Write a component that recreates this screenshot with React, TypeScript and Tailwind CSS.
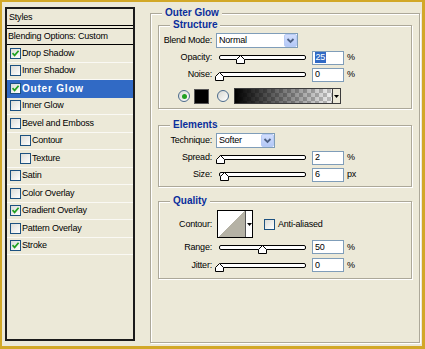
import React from "react";

type Row = { label: string; checked: boolean; indent?: boolean; selected?: boolean };

const rows: Row[] = [
  { label: "Drop Shadow", checked: true },
  { label: "Inner Shadow", checked: false },
  { label: "Outer Glow", checked: true, selected: true },
  { label: "Inner Glow", checked: false },
  { label: "Bevel and Emboss", checked: false },
  { label: "Contour", checked: false, indent: true },
  { label: "Texture", checked: false, indent: true },
  { label: "Satin", checked: false },
  { label: "Color Overlay", checked: false },
  { label: "Gradient Overlay", checked: true },
  { label: "Pattern Overlay", checked: false },
  { label: "Stroke", checked: true },
];

function Checkbox({ checked }: { checked: boolean }) {
  return (
    <span className="flex items-center justify-center w-[11px] h-[11px] shrink-0 border border-[#1c5180] bg-gradient-to-br from-[#dcdcd7] to-white">
      {checked && (
        <svg width="9" height="9" viewBox="0 0 9 9">
          <path d="M1.5 4.2 L3.6 6.4 L7.6 1.8" fill="none" stroke="#21a121" strokeWidth="1.7" />
        </svg>
      )}
    </span>
  );
}

function Radio({ on }: { on: boolean }) {
  return (
    <span className="flex items-center justify-center w-[12px] h-[12px] shrink-0 rounded-full border border-[#4a6a8c] bg-gradient-to-br from-[#d8d8d2] to-white">
      {on && <span className="w-[5px] h-[5px] rounded-full bg-[#21a121]" />}
    </span>
  );
}

function LeftPanel() {
  return (
    <div className="w-[130px] h-[334px] shrink-0 border-2 border-[#1b1b1b] flex flex-col">
      <div className="h-[17px] border-b border-black flex items-center pl-[2px]">Styles</div>
      <div className="h-[2px]" />
      <div className="h-[17px] border-y border-black flex items-center pl-[1px]">Blending Options: Custom</div>
      {rows.map((r) => (
        <div
          key={r.label}
          className={
            r.selected
              ? "h-[17.5px] flex items-center bg-[#316ac5] text-white font-bold text-[10px] tracking-[0.8px] pl-[3px]"
              : r.indent
              ? "h-[17.5px] flex items-center border-b border-[#faf9f4] pl-[13px]"
              : "h-[17.5px] flex items-center border-b border-[#faf9f4] pl-[3px]"
          }
        >
          <Checkbox checked={r.checked} />
          <span className="ml-[1px]">{r.label}</span>
        </div>
      ))}
    </div>
  );
}

function Group({ title, className, children }: { title: string; className: string; children?: React.ReactNode }) {
  return (
    <div className={"relative border border-[#aca899] shadow-[1px_1px_0_#fff,inset_1px_1px_0_#fff] " + className}>
      <span className="absolute left-[11px] top-[-7px] px-[3px] bg-[#ece9d8] text-[10px] leading-[12px] font-bold tracking-normal text-[#0a2e9c]">
        {title}
      </span>
      {children}
    </div>
  );
}

function Label({ children }: { children: React.ReactNode }) {
  return <span className="w-[53px] shrink-0 text-right">{children}</span>;
}

function Chevron() {
  return (
    <span className="w-[13px] h-[13px] shrink-0 rounded-[2px] border border-[#b8cbf5] bg-gradient-to-b from-[#d2defd] to-[#b3c8f6] flex items-center justify-center">
      <svg width="9" height="9" viewBox="0 0 9 9">
        <path d="M1.5 3 L4.5 6 L7.5 3" fill="none" stroke="#4d6185" strokeWidth="1.8" />
      </svg>
    </span>
  );
}

function Select({ value, className }: { value: string; className: string }) {
  return (
    <div className={"flex items-center h-[15px] border border-[#7f9db9] bg-white " + className}>
      <span className="flex-1 pl-[2px]">{value}</span>
      <Chevron />
    </div>
  );
}

function Slider({ pct }: { pct: number }) {
  return (
    <div className="relative ml-[7px] w-[87px] h-[5px] shrink-0 border border-black bg-white rounded-[2px]">
      <svg className="absolute top-[-1px]" style={{ left: pct * 0.87 - 5.5 }} width="9" height="9" viewBox="0 0 9 9">
        <path d="M0.5 8.5 V4.5 L4.5 0.5 L8.5 4.5 V8.5 Z" fill="#fff" stroke="#000" />
      </svg>
    </div>
  );
}

function Field({ value, selected }: { value: string; selected?: boolean }) {
  return (
    <div className="ml-[6px] w-[32px] h-[14px] shrink-0 border border-[#7f9db9] bg-white flex items-center pl-[2px]">
      {selected ? <span className="bg-[#316ac5] text-white px-[0.5px] py-[1px]">{value}</span> : <span>{value}</span>}
    </div>
  );
}

function SliderRow({
  label,
  pct,
  value,
  unit,
  selected,
  tall,
}: {
  label: string;
  pct: number;
  value: string;
  unit: string;
  selected?: boolean;
  tall?: boolean;
}) {
  return (
    <div className={tall ? "flex items-center h-[18px]" : "flex items-center h-[17px]"}>
      <Label>{label}</Label>
      <Slider pct={pct} />
      <Field value={value} selected={selected} />
      <span className="ml-[3px]">{unit}</span>
    </div>
  );
}

function RightPanel() {
  return (
    <Group title="Outer Glow" className="ml-[15px] mt-[6px] w-[270px] h-[330px] shrink-0 px-[7px] pt-[11px]">
      <Group title="Structure" className="w-[254px] pt-[6px] pb-[3px]">
        <div className="flex items-center h-[17px]">
          <Label>Blend Mode:</Label>
          <Select value="Normal" className="ml-[4px] w-[82px]" />
        </div>
        <SliderRow label="Opacity:" pct={25} value="25" unit="%" selected />
        <SliderRow label="Noise:" pct={0} value="0" unit="%" />
        <div className="flex items-center h-[18px] mt-[4px] pl-[19px]">
          <Radio on />
          <span className="ml-[4px] w-[15px] h-[15px] shrink-0 bg-black border border-[#555]" />
          <span className="ml-[8px]">
            <Radio on={false} />
          </span>
          <div className="ml-[5px] flex w-[107px] h-[16px] shrink-0 border border-[#3c3c3c]">
            <div className="flex-1 bg-[image:linear-gradient(to_right,#000,transparent),repeating-conic-gradient(#bdbdbd_0%_25%,#efefef_0%_50%)] bg-size-[100%_100%,8px_8px]" />
            <div className="w-[8px] border-l border-[#3c3c3c] bg-[#ece9d8] flex items-center justify-center">
              <svg width="5" height="3" viewBox="0 0 5 3">
                <path d="M0 0 H5 L2.5 3 Z" fill="#000" />
              </svg>
            </div>
          </div>
        </div>
      </Group>

      <Group title="Elements" className="w-[254px] mt-[16px] pt-[6px] pb-[3px]">
        <div className="flex items-center h-[17px]">
          <Label>Technique:</Label>
          <Select value="Softer" className="ml-[4px] w-[59px]" />
        </div>
        <SliderRow label="Spread:" pct={2} value="2" unit="%" />
        <SliderRow label="Size:" pct={6} value="6" unit="px" />
      </Group>

      <Group title="Quality" className="w-[254px] mt-[14px] pt-[8px] pb-[4px]">
        <div className="flex items-center h-[28px]">
          <Label>Contour:</Label>
          <div className="ml-[5px] flex w-[36px] h-[28px] shrink-0 border border-black bg-white">
            <div className="w-[27px] h-full bg-[linear-gradient(to_top_left,#b5b2a5_50%,#fff_50%)]" />
            <div className="flex-1 border-l border-[#555] flex items-center justify-center">
              <svg width="5" height="3" viewBox="0 0 5 3">
                <path d="M0 0 H5 L2.5 3 Z" fill="#000" />
              </svg>
            </div>
          </div>
          <span className="ml-[11px]">
            <Checkbox checked={false} />
          </span>
          <span className="ml-[3px]">Anti-aliased</span>
        </div>
        <SliderRow label="Range:" pct={50} value="50" unit="%" tall />
        <SliderRow label="Jitter:" pct={0} value="0" unit="%" tall />
      </Group>
    </Group>
  );
}

export default function App() {
  return (
    <div className="w-[425px] h-[349px] overflow-hidden bg-[#ece9d8] border-t-2 border-l-2 border-r-[3px] border-b-[3px] border-[#d2a828] flex items-start pt-[5px] pl-[3px] font-['Liberation_Sans',Arial,sans-serif] text-[9px] leading-none tracking-[-0.2px] text-black">
      <LeftPanel />
      <RightPanel />
    </div>
  );
}
